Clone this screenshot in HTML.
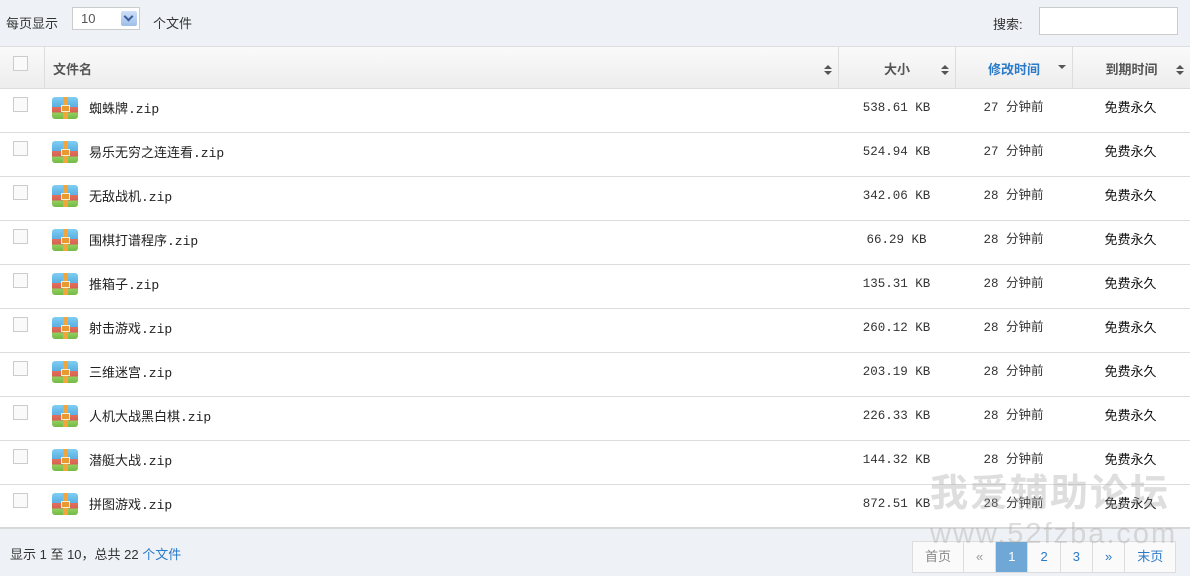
<!DOCTYPE html>
<html><head><meta charset="utf-8"><style>
body{margin:0;background:#fff;font-family:"Liberation Sans","Noto Sans CJK SC",sans-serif;font-size:13px;color:#333;width:1199px;height:576px;overflow:hidden;position:relative}
.top{position:absolute;left:0;top:0;width:1190px;height:46px;background:#eef1f5}
.sel{position:absolute;left:72px;top:7px;width:68px;height:23px;border:1px solid #ccc;background:#fff;box-sizing:border-box}
.sel span{position:absolute;left:8px;top:3px;color:#555;font-size:13px}
.sel i{position:absolute;right:2px;top:3px;width:16px;height:15px;background:linear-gradient(#cfe0f8,#9ebfe8);border-radius:2px}
.sel i:after{content:"";position:absolute;left:4px;top:2px;width:5px;height:5px;border-right:2px solid #3a5f9a;border-bottom:2px solid #3a5f9a;transform:rotate(45deg)}
.search{position:absolute;left:1039px;top:7px;width:139px;height:28px;border:1px solid #ccc;background:#fff;box-sizing:border-box}
.row{position:absolute;left:0;width:1190px;height:44px;border-bottom:1px solid #ddd;box-sizing:border-box}
.hd{top:46px;height:43px;background:linear-gradient(#fafafa,#ededed);border-top:1px solid #ddd;font-weight:bold;color:#555}
.c{position:absolute;top:0;height:100%;box-sizing:border-box}
.hd .c{border-left:1px solid #ddd;line-height:45px}
.cb{position:absolute;left:13px;top:8px;width:13px;height:13px;border:1px solid #ccc;background:#fafafa}
.hd .cb{top:9px}
.sort{position:absolute;right:10px;top:18px;width:0;height:0}
.sort:before{content:"";position:absolute;left:-4px;top:0;border:4px solid transparent;border-top:0;border-bottom:4px solid #555}
.sort:after{content:"";position:absolute;left:-4px;top:6px;border:4px solid transparent;border-bottom:0;border-top:4px solid #555}
.down:before{display:none}.down:after{top:0}
.ic{position:absolute;left:52px;top:8px;width:26px;height:22px;border-radius:3px;overflow:hidden;background:linear-gradient(#7fcdf2 0,#5ab0e2 45%,#e07060 45%,#d8604e 70%,#94d062 70%,#74b944 100%)}
.ic:before{content:"";position:absolute;left:11px;top:0;width:5px;height:22px;background:#f0a63a}
.ic:after{content:"";position:absolute;left:9px;top:8px;width:7px;height:5px;border:1px solid #f5f0d0;background:#e79a30}
.nm{position:absolute;left:89px;top:13px;line-height:16px;font-family:"Liberation Mono","Noto Sans CJK SC",monospace;font-size:13px;color:#222;white-space:nowrap}
.sz,.tm,.ex{position:absolute;top:11px;line-height:16px;text-align:center;font-family:"Liberation Mono","Noto Sans CJK SC",monospace;font-size:12.5px;color:#333;width:117px}
.sz{left:838px}.tm{left:955px}.ex{left:1072px;font-family:"Liberation Sans","Noto Sans CJK SC",sans-serif;font-size:13px;color:#111}
.bot{position:absolute;left:0;top:529px;width:1190px;height:47px;background:#eef1f5}
.bot .l{position:absolute;left:10px;top:15px;color:#333}
.pg{position:absolute;left:912px;top:12px;display:flex;border:1px solid #ddd}
.pg span{height:30px;line-height:30px;padding:0 12px;border-left:1px solid #ddd;background:#fafafa;color:#2a7ac8;font-size:13px}
.pg span:first-child{border-left:0;color:#888}
.pg .a{background:#6fa8d6;color:#fff}
.wm1{position:absolute;left:930px;top:462px;font-size:38px;font-weight:bold;color:rgba(160,160,160,.35);letter-spacing:2px;white-space:nowrap}
.wm2{position:absolute;left:930px;top:518px;font-size:29px;color:rgba(160,160,160,.35);letter-spacing:2px;white-space:nowrap}
</style></head><body>
<div class="top"><span style="position:absolute;left:6px;top:13px">每页显示</span><div class="sel"><span>10</span><i></i></div><span style="position:absolute;left:153px;top:13px">个文件</span>
<span style="position:absolute;left:993px;top:14px">搜索:</span><div class="search"></div></div>
<div class="row hd">
<div class="c" style="left:0;width:44px;border-left:0"><span class="cb"></span></div>
<div class="c" style="left:44px;width:794px;padding-left:8px">文件名<i class="sort"></i></div>
<div class="c" style="left:838px;width:117px;text-align:center">大小<i class="sort"></i></div>
<div class="c" style="left:955px;width:117px;text-align:center;color:#2a7ac8">修改时间<i class="sort down"></i></div>
<div class="c" style="left:1072px;width:118px;text-align:center">到期时间 <i class="sort"></i></div>
</div>
<div class="row" style="top:89px"><span class="cb"></span><span class="ic"></span><span class="nm">蜘蛛牌.zip</span><span class="sz">538.61 KB</span><span class="tm">27 分钟前</span><span class="ex">免费永久</span></div>
<div class="row" style="top:133px"><span class="cb"></span><span class="ic"></span><span class="nm">易乐无穷之连连看.zip</span><span class="sz">524.94 KB</span><span class="tm">27 分钟前</span><span class="ex">免费永久</span></div>
<div class="row" style="top:177px"><span class="cb"></span><span class="ic"></span><span class="nm">无敌战机.zip</span><span class="sz">342.06 KB</span><span class="tm">28 分钟前</span><span class="ex">免费永久</span></div>
<div class="row" style="top:221px"><span class="cb"></span><span class="ic"></span><span class="nm">围棋打谱程序.zip</span><span class="sz">66.29 KB</span><span class="tm">28 分钟前</span><span class="ex">免费永久</span></div>
<div class="row" style="top:265px"><span class="cb"></span><span class="ic"></span><span class="nm">推箱子.zip</span><span class="sz">135.31 KB</span><span class="tm">28 分钟前</span><span class="ex">免费永久</span></div>
<div class="row" style="top:309px"><span class="cb"></span><span class="ic"></span><span class="nm">射击游戏.zip</span><span class="sz">260.12 KB</span><span class="tm">28 分钟前</span><span class="ex">免费永久</span></div>
<div class="row" style="top:353px"><span class="cb"></span><span class="ic"></span><span class="nm">三维迷宫.zip</span><span class="sz">203.19 KB</span><span class="tm">28 分钟前</span><span class="ex">免费永久</span></div>
<div class="row" style="top:397px"><span class="cb"></span><span class="ic"></span><span class="nm">人机大战黑白棋.zip</span><span class="sz">226.33 KB</span><span class="tm">28 分钟前</span><span class="ex">免费永久</span></div>
<div class="row" style="top:441px"><span class="cb"></span><span class="ic"></span><span class="nm">潜艇大战.zip</span><span class="sz">144.32 KB</span><span class="tm">28 分钟前</span><span class="ex">免费永久</span></div>
<div class="row" style="top:485px;border-bottom:2px solid #d8d8d8"><span class="cb"></span><span class="ic"></span><span class="nm">拼图游戏.zip</span><span class="sz">872.51 KB</span><span class="tm">28 分钟前</span><span class="ex">免费永久</span></div>
<div class="bot"><span class="l">显示 1 至 10，总共 22 <span style="color:#2a7ac8">个文件</span></span>
<div class="pg"><span>首页</span><span style="color:#999">«</span><span class="a">1</span><span>2</span><span>3</span><span>»</span><span>末页</span></div></div>
<div class="wm1">我爱辅助论坛</div>
<div class="wm2">www.52fzba.com</div>
</body></html>
